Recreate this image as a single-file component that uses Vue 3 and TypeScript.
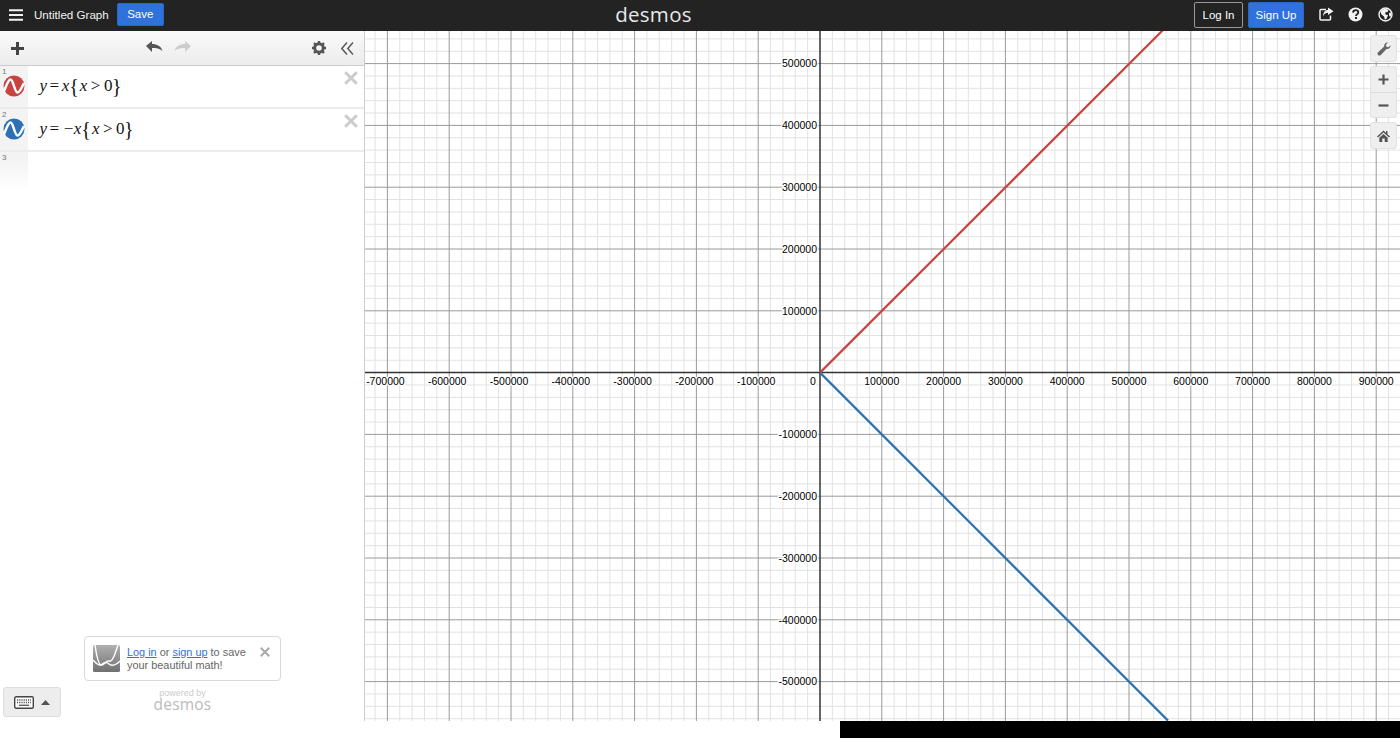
<script setup lang="ts">
const ox = 820
const oy = 372.6
const unit = 61.8
const minor = unit / 5

const vMinor: number[] = []
const vMajor: number[] = []
for (let i = -37; i <= 47; i++) {
  const x = ox + i * minor
  if (x < 365 || x > 1400) continue
  if (i % 5 === 0) {
    if (i !== 0) vMajor.push(x)
  } else vMinor.push(x)
}
const hMinor: number[] = []
const hMajor: number[] = []
for (let i = -28; i <= 28; i++) {
  const y = oy + i * minor
  if (y < 30 || y > 721) continue
  if (i % 5 === 0) {
    if (i !== 0) hMajor.push(y)
  } else hMinor.push(y)
}
const xLabels = [-7, -6, -5, -4, -3, -2, -1, 1, 2, 3, 4, 5, 6, 7, 8, 9].map((n) => ({
  x: ox + n * unit + (n < 0 ? -2 : 0),
  text: String(n * 100000),
}))
const yLabels = [5, 4, 3, 2, 1, -1, -2, -3, -4, -5].map((n) => ({
  y: oy - n * unit + 3.8,
  text: String(n * 100000),
}))
const rows = [
  { n: 1, color: '#c74440', neg: false },
  { n: 2, color: '#2d70b3', neg: true },
]
</script>

<template>
  <div class="app">
    <header class="topbar">
      <div class="top-left">
        <svg class="burger" width="14" height="12" viewBox="0 0 14 12">
          <path d="M0 1.2H14M0 6H14M0 10.8H14" stroke="#f2f2f2" stroke-width="2" />
        </svg>
        <span class="title">Untitled Graph</span>
        <button class="btn blue save">Save</button>
      </div>
      <div class="logo">desmos</div>
      <div class="top-right">
        <button class="btn login">Log In</button>
        <button class="btn blue signup">Sign Up</button>
        <svg class="ti share" width="15" height="14" viewBox="0 0 15 14">
          <path d="M7 2.5H2a1 1 0 0 0-1 1v8.500a1 1 0 0 0 1 1h8.500a1 1 0 0 0 1-1V8.500" fill="none" stroke="#f2f2f2" stroke-width="1.500" />
          <path d="M9 0.500L14.500 4.300L9 8V5.800C6.500 5.800 5 7 4 9.500C4 6 6 3 9 2.800Z" fill="#f2f2f2" />
        </svg>
        <svg class="ti help" width="15" height="15" viewBox="0 0 15 15">
          <circle cx="7.500" cy="7.500" r="7" fill="#f2f2f2" />
          <path d="M5 5.600C5.200 4 6.300 3.200 7.700 3.200C9.200 3.200 10.300 4.100 10.300 5.400C10.300 7.200 8 7.200 8 8.900" fill="none" stroke="#222" stroke-width="1.800" />
          <rect x="7" y="10" width="2" height="2" fill="#222" />
        </svg>
        <svg class="ti globe" width="15" height="15" viewBox="0 0 15 15">
          <circle cx="7.500" cy="7.500" r="6.500" fill="none" stroke="#f2f2f2" stroke-width="1.400" />
          <path d="M4 2.500L8 1.800L10.500 3L9.500 5L7 5.500L7.500 7.500L10 8L9 11L7 13L6 9.500L3.500 7.500L2.500 5ZM11 6L13 5.500L13.500 8.500L12 10L11 8Z" fill="#f2f2f2" />
        </svg>
      </div>
    </header>

    <main class="work">
      <aside class="side">
        <div class="toolbar">
          <svg width="13" height="13" viewBox="0 0 13 13">
            <path d="M6.500 0V13M0 6.500H13" stroke="#444" stroke-width="3" />
          </svg>
          <div class="history">
            <svg width="17" height="12" viewBox="0 0 17 12">
              <path d="M0 5L6 0V3C11 3 15 5 16.500 10C14 7.500 10 7 6 7V11Z" fill="#555" />
            </svg>
            <svg width="17" height="12" viewBox="0 0 17 12">
              <path d="M17 5L11 0V3C6 3 2 5 0.500 10C3 7.500 7 7 11 7V11Z" fill="#ccc" />
            </svg>
          </div>
          <div class="tool-right">
            <svg width="14" height="14" viewBox="0 0 14 14">
              <circle cx="7" cy="7" r="4.300" fill="none" stroke="#555" stroke-width="3" />
              <path d="M7 0V14M0 7H14M2 2L12 12M12 2L2 12" stroke="#555" stroke-width="2.400" stroke-dasharray="3 8 3 0" />
            </svg>
            <svg width="13" height="13" viewBox="0 0 13 13">
              <path d="M6 0.500L0.800 6.500L6 12.500M12 0.500L6.800 6.500L12 12.500" fill="none" stroke="#555" stroke-width="1.400" />
            </svg>
          </div>
        </div>
        <div class="list">
          <div v-for="r in rows" :key="r.n" class="row">
            <div class="gutter">
              <span class="num">{{ r.n }}</span>
              <svg class="curve" width="22" height="22" viewBox="0 0 22 22">
                <circle cx="11" cy="11" r="10.500" :fill="r.color" />
                <path d="M1 16C3 12 5 4.500 7.500 4.500C10.500 4.500 11.500 17.500 14.500 17.500C17 17.500 19 12 21 8" fill="none" stroke="#fff" stroke-width="2.500" />
              </svg>
            </div>
            <div class="math">
              <i>y</i><span class="op">=</span><span v-if="r.neg" class="minus">−</span><i>x</i><span class="brace open">{</span><i>x</i><span class="op wide">&gt;</span><span>0</span><span class="brace close">}</span>
            </div>
            <svg class="rm" width="14" height="14" viewBox="0 0 14 14">
              <path d="M1.200 1.200L12.800 12.800M12.800 1.200L1.200 12.800" stroke="#ccc" stroke-width="3" />
            </svg>
          </div>
          <div class="empty"><span class="num">3</span></div>
        </div>
        <div class="foot">
          <button class="kbd">
            <svg width="20" height="13" viewBox="0 0 20 13">
              <rect x="0.700" y="0.700" width="18.600" height="11.600" rx="1.500" fill="#fff" stroke="#444" stroke-width="1.400" />
              <path d="M3 4H17M3 6.500H17" stroke="#555" stroke-width="1.300" stroke-dasharray="1.200 1" />
              <path d="M5 9.300H15" stroke="#555" stroke-width="1.300" />
            </svg>
            <svg width="9" height="5" viewBox="0 0 9 5"><path d="M0 5L4.500 0L9 5Z" fill="#555" /></svg>
          </button>
          <div class="promo-col">
            <div class="promo">
              <svg class="promo-ico" width="27" height="27" viewBox="0 0 27 27">
                <defs>
                  <linearGradient id="pg" x1="0" y1="0" x2="0" y2="1">
                    <stop offset="0" stop-color="#b0b0b0" />
                    <stop offset="1" stop-color="#707070" />
                  </linearGradient>
                </defs>
                <rect width="27" height="27" rx="1.500" fill="url(#pg)" />
                <path d="M2 0C3 7 5 19 8 20C11 21 13 15 16 16C18 17 20 14 21.500 10C23 6 24 3 25 0" fill="none" stroke="#fff" stroke-width="1.400" />
                <path d="M0 15C3 18 5 21 8 20C11 17 14 17 16 19C18 21 23 21 27 16" fill="none" stroke="#fff" stroke-width="1.400" />
              </svg>
              <p class="promo-text"><a href="#">Log in</a> or <a href="#">sign up</a> to save<br />your beautiful math!</p>
              <svg class="promo-x" width="10" height="10" viewBox="0 0 10 10">
                <path d="M0.800 0.800L9.200 9.200M9.200 0.800L0.800 9.200" stroke="#aaa" stroke-width="2" />
              </svg>
            </div>
            <div class="powered">powered by</div>
            <div class="powered-logo">desmos</div>
          </div>
        </div>
      </aside>

      <section class="graph">
        <svg class="plot" width="1035" height="690" viewBox="365 31 1035 690">
          <line v-for="x in vMinor" :key="'a' + x" :x1="x" :x2="x" y1="31" y2="721" class="gm" />
          <line v-for="y in hMinor" :key="'b' + y" :y1="y" :y2="y" x1="365" x2="1400" class="gm" />
          <line v-for="x in vMajor" :key="'c' + x" :x1="x" :x2="x" y1="31" y2="721" class="gj" />
          <line v-for="y in hMajor" :key="'d' + y" :y1="y" :y2="y" x1="365" x2="1400" class="gj" />
          <line :x1="ox" :x2="ox" y1="31" y2="721" class="axis" />
          <line :y1="oy" :y2="oy" x1="365" x2="1400" class="axis" />
          <line :x1="ox" :y1="oy" x2="1163" y2="30" class="red" />
          <line :x1="ox" :y1="oy" x2="1168" y2="720.600" class="blu" />
          <text v-for="l in xLabels" :key="'x' + l.text" :x="l.x" y="385" text-anchor="middle" class="lb">{{ l.text }}</text>
          <text v-for="l in yLabels" :key="'y' + l.text" x="817" :y="l.y" text-anchor="end" class="lb">{{ l.text }}</text>
          <text x="813" y="385" text-anchor="middle" class="lb">0</text>
        </svg>
        <div class="controls">
          <div class="ctl">
            <svg width="14" height="14" viewBox="0 0 14 14">
              <path d="M13.500 3.200C13.700 5.500 11.800 7.300 9.500 6.900L3.800 13C3 13.800 1.900 13.800 1.100 13C0.300 12.200 0.300 11 1.100 10.300L7.200 4.500C6.800 2.300 8.500 0.200 10.900 0.500L8.900 2.700L9.400 4.700L11.300 5.200Z" fill="#666" />
            </svg>
          </div>
          <div class="ctl-group">
            <div class="ctl part">
              <svg width="11" height="11" viewBox="0 0 11 11"><path d="M5.500 0.500V10.500M0.500 5.500H10.500" stroke="#555" stroke-width="2.200" /></svg>
            </div>
            <div class="ctl part">
              <svg width="11" height="11" viewBox="0 0 11 11"><path d="M0.500 5.500H10.500" stroke="#555" stroke-width="2.200" /></svg>
            </div>
          </div>
          <div class="ctl">
            <svg width="13" height="12" viewBox="0 0 13 12">
              <path d="M6.500 0.500L0 6.500L1 7.500L6.500 2.500L12 7.500L13 6.500L10.500 4.200V1H9V2.800ZM2.300 7.800V12H5.300V8.500H7.700V12H10.700V7.800L6.500 4Z" fill="#555" />
            </svg>
          </div>
        </div>
      </section>
    </main>

    <div class="strip"><div class="strip-w"></div><div class="strip-b"></div></div>
  </div>
</template>

<style>
html, body { margin: 0; background: #fff; }
</style>

<style scoped>
.app {
  width: 1400px;
  height: 738px;
  display: flex;
  flex-direction: column;
  overflow: hidden;
  font-family: "Liberation Sans", Arial, sans-serif;
}
.topbar {
  height: 31px;
  flex: none;
  background: #232323;
  display: flex;
  align-items: center;
  justify-content: space-between;
  position: relative;
  color: #f2f2f2;
}
.top-left { display: flex; align-items: center; padding-left: 9px; height: 100%; }
.burger { margin-right: 11px; margin-top: -2px; }
.title { font-size: 11.600px; margin-right: 8px; margin-top: -3px; }
.btn {
  font-family: inherit;
  font-size: 11.500px;
  border-radius: 2px;
  padding: 0;
  color: #fff;
  box-sizing: border-box;
}
.blue { background: #2f72dc; border: 1px solid #2a68c8; }
.save { width: 47px; height: 23px; margin-top: -3px; }
.logo {
  position: absolute;
  left: 613px;
  top: 0;
  width: 81px;
  text-align: center;
  font-family: "Open Sans", sans-serif;
  font-size: 20.500px;
  line-height: 28px;
  font-weight: 400;
  color: #e8e8e8;
  letter-spacing: 0.300px;
}
.top-right { display: flex; align-items: center; height: 100%; padding-right: 7px; }
.login {
  width: 49px;
  height: 26px;
  background: #232323;
  border: 1px solid #999;
  margin-right: 5px;
  margin-top: -2px;
}
.signup { width: 56px; height: 26px; margin-top: -2px; margin-right: 15px; }
.ti { margin-top: -3px; }
.share { margin-right: 14px; margin-left: 0; }
.help { margin-right: 15px; }
.work { height: 690px; flex: none; display: flex; }
.side {
  width: 365px;
  flex: none;
  box-sizing: border-box;
  border-right: 1px solid #ccc;
  display: flex;
  flex-direction: column;
  background: #fff;
}
.toolbar {
  height: 35px;
  flex: none;
  box-sizing: border-box;
  border-bottom: 1px solid #ccc;
  background: linear-gradient(#fafafa, #ececec);
  display: flex;
  align-items: center;
  justify-content: space-between;
  padding: 0 10px 0 11px;
  position: relative;
}
.history {
  position: absolute;
  left: 146px;
  top: 10px;
  display: flex;
  gap: 11px;
}
.tool-right { display: flex; align-items: center; gap: 15px; }
.list { flex: 1; }
.row {
  height: 43px;
  box-sizing: border-box;
  border-bottom: 2px solid #ececec;
  display: flex;
  align-items: center;
  position: relative;
}
.gutter {
  width: 28px;
  height: 100%;
  flex: none;
  background: #f3f3f3;
  position: relative;
}
.num {
  position: absolute;
  left: 2px;
  top: 1px;
  font-size: 8px;
  line-height: 9px;
  color: #777;
}
.curve { position: absolute; left: 2.500px; top: 9px; }
.math {
  margin: -2px 0 0 11.500px;
  font-family: "Liberation Serif", "Times New Roman", serif;
  font-size: 17px;
  color: #111;
  display: flex;
  align-items: center;
  white-space: pre;
}
.op { margin: 0 2.500px; }
.op.wide { margin: 0 3.500px; }
.minus { margin-left: 2px; margin-right: 0.500px; }
.brace { font-size: 20px; line-height: 20px; font-weight: 300; }
.brace.open { margin: 0 1px 0 0; }
.brace.close { margin-left: -0.500px; }
.rm { position: absolute; right: 6px; top: 5px; }
.empty {
  width: 28px;
  height: 38px;
  position: relative;
  background: linear-gradient(#f3f3f3 20%, #fff);
}
.foot {
  flex: none;
  height: 85px;
  display: flex;
  align-items: flex-end;
  padding: 0 0 0 3px;
  box-sizing: border-box;
}
.kbd {
  width: 58px;
  height: 30px;
  margin-bottom: 4px;
  background: #ededed;
  border: 1px solid #ddd;
  border-radius: 3px;
  display: flex;
  align-items: center;
  justify-content: center;
  gap: 7px;
  padding: 0;
  flex: none;
}
.promo-col {
  margin-left: 23px;
  width: 197px;
  height: 85px;
  display: flex;
  flex-direction: column;
  align-items: center;
}
.promo {
  width: 100%;
  height: 45px;
  box-sizing: border-box;
  border: 1px solid #d8d8d8;
  border-radius: 4px;
  display: flex;
  align-items: center;
  position: relative;
  padding-left: 8px;
  flex: none;
}
.promo-text {
  margin: 0 0 0 7px;
  font-size: 10.900px;
  line-height: 13px;
  color: #666;
  white-space: nowrap;
}
.promo-text a { color: #2f72dc; text-decoration: underline; }
.promo-x { position: absolute; right: 10px; top: 10px; }
.powered { font-size: 9px; line-height: 9px; color: #ccc; margin-top: 8px; }
.powered-logo {
  font-family: "Open Sans", sans-serif;
  font-weight: 400;
  font-size: 15.500px;
  line-height: 12px;
  color: #bbb;
  letter-spacing: 0.200px;
}
.graph { flex: 1; position: relative; overflow: hidden; background: #fff; }
.plot { position: absolute; left: 0; top: 0; display: block; }
.gm { stroke: #e2e2e2; stroke-width: 1; }
.gj { stroke: #9a9a9a; stroke-width: 1; }
.axis { stroke: #333; stroke-width: 1.500; }
.red { stroke: #c74440; stroke-width: 2.200; }
.blu { stroke: #2d70b3; stroke-width: 2.200; }
.lb {
  font-family: "Liberation Sans", Arial, sans-serif;
  font-size: 10.500px;
  fill: #000;
  stroke: #fff;
  stroke-width: 2.500px;
  paint-order: stroke;
}
.controls {
  position: absolute;
  right: 3px;
  top: 4px;
  display: flex;
  flex-direction: column;
  gap: 4px;
}
.ctl {
  width: 27px;
  height: 27px;
  box-sizing: border-box;
  background: #efefef;
  border: 1px solid #e2e2e2;
  border-radius: 3px;
  display: flex;
  align-items: center;
  justify-content: center;
}
.ctl-group { display: flex; flex-direction: column; }
.part { height: 26px; }
.part:first-child { border-radius: 3px 3px 0 0; border-bottom: 0; }
.part:last-child { border-radius: 0 0 3px 3px; border-top: 1px solid #ddd; }
.strip { height: 17px; flex: none; display: flex; }
.strip-w { width: 840px; background: #fff; }
.strip-b { flex: 1; background: #000; }
</style>
